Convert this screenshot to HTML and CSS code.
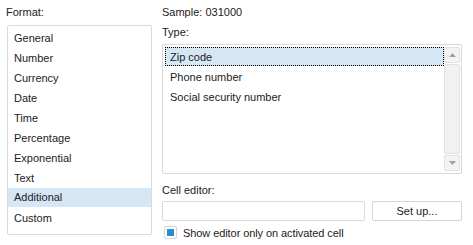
FILE: index.html
```html
<!DOCTYPE html>
<html>
<head>
<meta charset="utf-8">
<link rel="stylesheet" href="styles.css">
</head>
<body>
<div class="dialog">
  <div class="left">
    <div class="label">Format:</div>
    <div class="listbox formats">
      <div class="item">General</div>
      <div class="item">Number</div>
      <div class="item">Currency</div>
      <div class="item">Date</div>
      <div class="item">Time</div>
      <div class="item">Percentage</div>
      <div class="item">Exponential</div>
      <div class="item">Text</div>
      <div class="item selected">Additional</div>
      <div class="item">Custom</div>
    </div>
  </div>
  <div class="right">
    <div class="label">Sample: 031000</div>
    <div class="label type-label">Type:</div>
    <div class="listbox types">
      <div class="type-items">
        <div class="item selected focused">Zip code</div>
        <div class="item">Phone number</div>
        <div class="item">Social security number</div>
      </div>
      <div class="scrollbar">
        <div class="sb-btn"><svg width="7" height="4" viewBox="0 0 7 4"><path d="M3.5 0 L7 4 L0 4 Z" fill="#a0a0a0"/></svg></div>
        <div class="sb-track"></div>
        <div class="sb-btn"><svg width="7" height="4" viewBox="0 0 7 4"><path d="M0 0 L7 0 L3.5 4 Z" fill="#a0a0a0"/></svg></div>
      </div>
    </div>
    <div class="label editor-label">Cell editor:</div>
    <div class="editor-row">
      <div class="input"></div>
      <div class="button">Set up...</div>
    </div>
    <div class="check-row">
      <span class="checkbox"><span class="check-fill"></span></span>
      <span class="check-text">Show editor only on activated cell</span>
    </div>
  </div>
</div>
</body>
</html>
```
FILE: styles.css
```css
html, body {
  margin: 0;
  padding: 0;
  background: #ffffff;
}
body {
  font-family: "Liberation Sans", Arial, sans-serif;
  font-size: 11px;
  color: #222222;
  width: 473px;
  height: 245px;
  overflow: hidden;
}
.dialog {
  display: flex;
  padding: 6px 11px 0 6px;
  gap: 9px;
}
.left {
  width: 147px;
  display: flex;
  flex-direction: column;
}
.label {
  height: 13px;
  line-height: 13px;
  white-space: nowrap;
}
.left .label {
  margin-bottom: 6px;
}
.listbox {
  border: 1px solid #d9d9d9;
  border-radius: 2px;
  background: #fff;
  box-sizing: border-box;
}
.formats {
  margin-left: 1px;
  height: 210px;
  padding-top: 2px;
}
.item {
  height: 20px;
  line-height: 20px;
  padding-left: 6px;
  white-space: nowrap;
}
.selected {
  background: #d5e7f5;
}
.formats .selected {
  height: 19px;
  line-height: 19px;
  margin-bottom: 1px;
}
.right {
  flex: 1;
  display: flex;
  flex-direction: column;
  padding-left: 1px;
}
.type-label {
  margin-top: 7px;
}
.types {
  margin-top: 5px;
  height: 130px;
  width: 300px;
  display: flex;
  padding: 2px 1px 2px 2px;
  gap: 0;
}
.type-items {
  flex: 1;
}
.types .item {
  padding-left: 5px;
}
.focused {
  height: 19px;
  line-height: 18px;
  margin-bottom: 1px;
  box-sizing: border-box;
  border: 1px dotted #000;
  padding-left: 4px !important;
}
.scrollbar {
  width: 16px;
  display: flex;
  flex-direction: column;
  gap: 1px;
}
.sb-btn {
  height: 16px;
  border: 1px solid #e2e2e2;
  border-radius: 2px;
  background: #f3f3f3;
  box-sizing: border-box;
  display: flex;
  align-items: center;
  justify-content: center;
}
.sb-track {
  flex: 1;
  border: 1px solid #e2e2e2;
  border-radius: 2px;
  background: #f1f1f1;
}
.editor-label {
  margin-top: 10px;
}
.editor-row {
  display: flex;
  gap: 7px;
  margin-top: 4px;
  width: 300px;
}
.input {
  width: 203px;
  height: 20px;
  border: 1px solid #dadada;
  border-radius: 2px;
  box-sizing: border-box;
}
.button {
  flex: 1;
  height: 20px;
  line-height: 18px;
  border: 1px solid #d6d6d6;
  border-radius: 2px;
  box-sizing: border-box;
  text-align: center;
}
.check-row {
  display: flex;
  align-items: center;
  margin-top: 5px;
  height: 13px;
}
.checkbox {
  width: 13px;
  height: 13px;
  border: 1px solid #d6d6d6;
  border-radius: 2px;
  box-sizing: border-box;
  display: flex;
  align-items: center;
  justify-content: center;
  margin-left: 2px;
}
.check-fill {
  width: 7px;
  height: 7px;
  background: #2a8bd0;
}
.check-text {
  margin-left: 6px;
  white-space: nowrap;
  letter-spacing: -0.08px;
}
```
